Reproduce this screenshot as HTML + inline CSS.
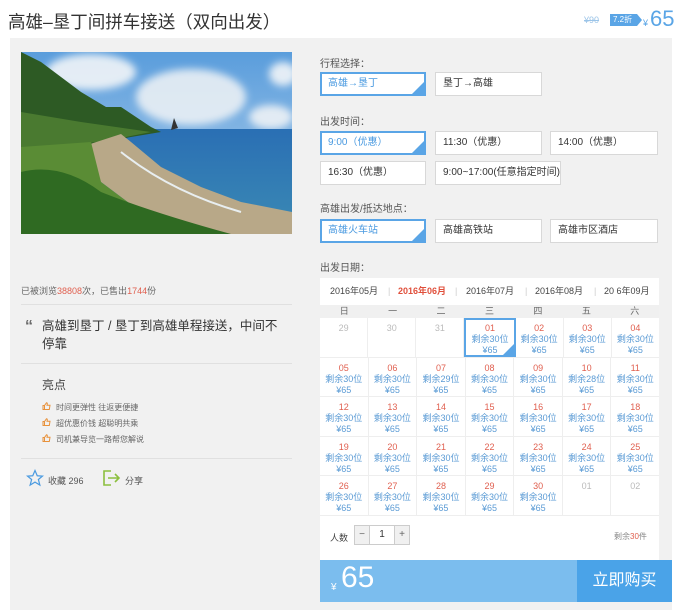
<!DOCTYPE html>
<html><head><meta charset="utf-8"><style>
*{margin:0;padding:0;box-sizing:border-box}
body{width:680px;height:610px;background:#fff;font-family:"Liberation Sans","Noto Sans CJK SC",sans-serif;position:relative;overflow:hidden;color:#333}
.a{position:absolute}
.panel{left:10px;top:38px;width:662px;height:572px;background:#f1f1f1}
.lbl{font-size:10px;color:#555}
.opt{position:absolute;height:24px;background:#fff;border:1px solid #d8d8d8;font-size:10px;color:#333;line-height:22px;padding-left:7px}
.opt.sel{border:2px solid #5aa5e6;color:#4a9ae0;line-height:20px;padding-left:6px}
.opt.sel:after{content:"";position:absolute;right:0;bottom:0;border-left:12px solid transparent;border-bottom:12px solid #5aa5e6}
.cal{left:320px;top:278px;width:339px;height:282px;background:#fff}
.months{position:absolute;top:0;left:0;width:339px;height:27px;font-size:9px;color:#444;line-height:27px}
.months span{position:absolute}
.wk{position:absolute;top:27px;left:0;width:339px;height:13px;background:#f0f0f0;display:flex}
.wk div{flex:1;text-align:center;font-size:9px;color:#666;line-height:13px}
.grid{position:absolute;top:40px;left:0;width:339px}
.row{display:flex;height:39.5px;border-bottom:1px solid #eee}
.c{flex:1;text-align:center;border-right:1px solid #eee;font-size:9px;line-height:11px;padding-top:5px;position:relative}
.c:last-child{border-right:none}
.c .d{color:#e06050}
.c.g .d{color:#bbb}
.c .s,.c .p{color:#5b9bd5}
.c.sel{border:2px solid #5aa5e6;padding-top:3px}
.c.sel:after{content:"";position:absolute;right:0;bottom:0;border-left:11px solid transparent;border-bottom:11px solid #5aa5e6}
.hi li{list-style:none;font-size:8px;color:#666;margin-bottom:5px;padding-left:14px;position:relative}
.hi svg{position:absolute;left:0;top:0}
</style></head><body>
<div class="a" style="left:8px;top:9px;font-size:17.5px;color:#333">高雄–垦丁间拼车接送（双向出发）</div>
<div class="a" style="left:584px;top:15px;font-size:9px;color:#9bc4e8;text-decoration:line-through">¥90</div>
<div class="a" style="left:610px;top:14px;height:12px;width:27px;background:#5aa5e6;color:#fff;font-size:8px;line-height:12px;padding-left:3px">7.2折</div>
<div class="a" style="left:637px;top:14px;border-left:5px solid #5aa5e6;border-top:6px solid transparent;border-bottom:6px solid transparent"></div>
<div class="a" style="left:643px;top:18px;font-size:9px;color:#5aa5e6">¥</div>
<div class="a" style="left:650px;top:6px;font-size:22px;color:#5aa5e6">65</div>

<div class="a panel"></div>
<svg class="a" style="left:21px;top:52px" width="271" height="182" viewBox="0 0 271 182">
<defs><linearGradient id="sky" x1="0" y1="0" x2="0" y2="1"><stop offset="0" stop-color="#5a9ddc"/><stop offset="1" stop-color="#b5d2ec"/></linearGradient>
<linearGradient id="sea" x1="0" y1="0" x2="0" y2="1"><stop offset="0" stop-color="#2a6fb4"/><stop offset="1" stop-color="#3b8ab4"/></linearGradient>
<filter id="bl"><feGaussianBlur stdDeviation="4"/></filter></defs>
<rect width="271" height="182" fill="url(#sky)"/>
<g filter="url(#bl)" opacity="0.9">
<ellipse cx="70" cy="20" rx="45" ry="18" fill="#f2f5f8"/>
<ellipse cx="170" cy="45" rx="55" ry="28" fill="#eaf0f5"/>
<ellipse cx="250" cy="65" rx="22" ry="12" fill="#eef2f6"/>
<ellipse cx="262" cy="22" rx="14" ry="12" fill="#f2f5f8"/>
</g>
<rect y="77" width="271" height="105" fill="url(#sea)"/>
<path d="M0 0 L20 10 L60 40 L85 55 L100 55 L130 75 L140 80 L110 85 L60 95 L0 110Z" fill="#2d5a24"/>
<path d="M0 60 L60 70 L130 80 L90 88 L0 100Z" fill="#4a7a30"/>
<path d="M150 78 L153 66 L157 76Z" fill="#333"/>
<path d="M60 95 L100 82 L110 90 L140 115 L180 135 L220 150 L271 160 L271 182 L180 182 L120 160 L80 130Z" fill="#b8a888"/>
<path d="M0 95 L70 90 L80 130 L120 160 L190 182 L0 182Z" fill="#5a8c35"/>
<path d="M0 120 Q40 110 80 140 Q130 160 210 182 L0 182Z" fill="#2f6a22"/>
<path d="M100 100 Q150 140 220 160" stroke="#e8eef0" stroke-width="2" fill="none"/>
</svg>

<div class="a" style="left:21px;top:284px;font-size:9px;color:#666">已被浏览<span style="color:#e06050">38808</span>次，已售出<span style="color:#e06050">1744</span>份</div>
<div class="a" style="left:21px;top:304px;width:271px;border-top:1px solid #e0e0e0"></div>
<div class="a" style="left:25px;top:318px;font-size:16px;color:#666;font-weight:bold">“</div>
<div class="a" style="left:42px;top:317px;width:240px;font-size:12.5px;line-height:18px;color:#333">高雄到垦丁 / 垦丁到高雄单程接送，中间不停靠</div>
<div class="a" style="left:21px;top:363px;width:271px;border-top:1px solid #e0e0e0"></div>
<div class="a" style="left:42px;top:376px;font-size:12px;color:#444">亮点</div>
<ul class="a hi" style="left:42px;top:402px">
<li><svg width="9" height="8" viewBox="0 0 9 8"><path d="M1 3.5H2.5V7.5H1Z M2.5 3.5L4.5 0.8Q5.5 0.8 5.3 2.3L5 3.3H8L7.3 7.5H2.5" fill="none" stroke="#e8913a" stroke-width="1"/></svg>时间更弹性 往返更便捷</li>
<li><svg width="9" height="8" viewBox="0 0 9 8"><path d="M1 3.5H2.5V7.5H1Z M2.5 3.5L4.5 0.8Q5.5 0.8 5.3 2.3L5 3.3H8L7.3 7.5H2.5" fill="none" stroke="#e8913a" stroke-width="1"/></svg>超优惠价钱 超聪明共乘</li>
<li><svg width="9" height="8" viewBox="0 0 9 8"><path d="M1 3.5H2.5V7.5H1Z M2.5 3.5L4.5 0.8Q5.5 0.8 5.3 2.3L5 3.3H8L7.3 7.5H2.5" fill="none" stroke="#e8913a" stroke-width="1"/></svg>司机兼导览一路帮您解说</li></ul>
<div class="a" style="left:21px;top:458px;width:271px;border-top:1px solid #e0e0e0"></div>
<svg class="a" style="left:26px;top:469px" width="18" height="18" viewBox="0 0 24 24"><path d="M12 2 L15 9 L22 9.5 L16.5 14 L18.5 21.5 L12 17.5 L5.5 21.5 L7.5 14 L2 9.5 L9 9Z" fill="none" stroke="#4a9ae0" stroke-width="1.6"/></svg>
<div class="a" style="left:48px;top:474px;font-size:9px;color:#555">收藏 296</div>
<svg class="a" style="left:103px;top:470px" width="18" height="16" viewBox="0 0 18 16"><path d="M8 1 H1 V15 H8" fill="none" stroke="#8cbf3f" stroke-width="1.6"/><path d="M5 8 H16 M12 4 L16 8 L12 12" fill="none" stroke="#8cbf3f" stroke-width="1.6"/></svg>
<div class="a" style="left:125px;top:474px;font-size:9px;color:#555">分享</div>

<div class="a lbl" style="left:320px;top:55px">行程选择：</div>
<div class="opt sel" style="left:320px;top:72px;width:106px">高雄→垦丁</div>
<div class="opt" style="left:435px;top:72px;width:107px">垦丁→高雄</div>
<div class="a lbl" style="left:320px;top:113px">出发时间：</div>
<div class="opt sel" style="left:320px;top:131px;width:106px">9:00（优惠）</div>
<div class="opt" style="left:435px;top:131px;width:107px">11:30（优惠）</div>
<div class="opt" style="left:550px;top:131px;width:108px">14:00（优惠）</div>
<div class="opt" style="left:320px;top:161px;width:106px">16:30（优惠）</div>
<div class="opt" style="left:435px;top:161px;width:126px">9:00~17:00(任意指定时间)</div>
<div class="a lbl" style="left:320px;top:200px">高雄出发/抵达地点：</div>
<div class="opt sel" style="left:320px;top:219px;width:106px">高雄火车站</div>
<div class="opt" style="left:435px;top:219px;width:107px">高雄高铁站</div>
<div class="opt" style="left:550px;top:219px;width:108px">高雄市区酒店</div>
<div class="a lbl" style="left:320px;top:259px">出发日期：</div>

<div class="a cal">
<div class="months"><span style="left:10px">2016年05月</span><span style="left:68px;color:#ccc">|</span><span style="left:78px;color:#e0503c;font-weight:bold">2016年06月</span><span style="left:135px;color:#ccc">|</span><span style="left:146px">2016年07月</span><span style="left:205px;color:#ccc">|</span><span style="left:215px">2016年08月</span><span style="left:274px;color:#ccc">|</span><span style="left:284px">20 6年09月</span></div>
<div class="wk"><div>日</div><div>一</div><div>二</div><div>三</div><div>四</div><div>五</div><div>六</div></div>
<div class="grid">
<div class="row"><div class="c g"><div class="d">29</div></div><div class="c g"><div class="d">30</div></div><div class="c g"><div class="d">31</div></div><div class="c sel"><div class="d">01</div><div class="s">剩余30位</div><div class="p">¥65</div></div><div class="c"><div class="d">02</div><div class="s">剩余30位</div><div class="p">¥65</div></div><div class="c"><div class="d">03</div><div class="s">剩余30位</div><div class="p">¥65</div></div><div class="c"><div class="d">04</div><div class="s">剩余30位</div><div class="p">¥65</div></div></div>
<div class="row"><div class="c"><div class="d">05</div><div class="s">剩余30位</div><div class="p">¥65</div></div><div class="c"><div class="d">06</div><div class="s">剩余30位</div><div class="p">¥65</div></div><div class="c"><div class="d">07</div><div class="s">剩余29位</div><div class="p">¥65</div></div><div class="c"><div class="d">08</div><div class="s">剩余30位</div><div class="p">¥65</div></div><div class="c"><div class="d">09</div><div class="s">剩余30位</div><div class="p">¥65</div></div><div class="c"><div class="d">10</div><div class="s">剩余28位</div><div class="p">¥65</div></div><div class="c"><div class="d">11</div><div class="s">剩余30位</div><div class="p">¥65</div></div></div>
<div class="row"><div class="c"><div class="d">12</div><div class="s">剩余30位</div><div class="p">¥65</div></div><div class="c"><div class="d">13</div><div class="s">剩余30位</div><div class="p">¥65</div></div><div class="c"><div class="d">14</div><div class="s">剩余30位</div><div class="p">¥65</div></div><div class="c"><div class="d">15</div><div class="s">剩余30位</div><div class="p">¥65</div></div><div class="c"><div class="d">16</div><div class="s">剩余30位</div><div class="p">¥65</div></div><div class="c"><div class="d">17</div><div class="s">剩余30位</div><div class="p">¥65</div></div><div class="c"><div class="d">18</div><div class="s">剩余30位</div><div class="p">¥65</div></div></div>
<div class="row"><div class="c"><div class="d">19</div><div class="s">剩余30位</div><div class="p">¥65</div></div><div class="c"><div class="d">20</div><div class="s">剩余30位</div><div class="p">¥65</div></div><div class="c"><div class="d">21</div><div class="s">剩余30位</div><div class="p">¥65</div></div><div class="c"><div class="d">22</div><div class="s">剩余30位</div><div class="p">¥65</div></div><div class="c"><div class="d">23</div><div class="s">剩余30位</div><div class="p">¥65</div></div><div class="c"><div class="d">24</div><div class="s">剩余30位</div><div class="p">¥65</div></div><div class="c"><div class="d">25</div><div class="s">剩余30位</div><div class="p">¥65</div></div></div>
<div class="row"><div class="c"><div class="d">26</div><div class="s">剩余30位</div><div class="p">¥65</div></div><div class="c"><div class="d">27</div><div class="s">剩余30位</div><div class="p">¥65</div></div><div class="c"><div class="d">28</div><div class="s">剩余30位</div><div class="p">¥65</div></div><div class="c"><div class="d">29</div><div class="s">剩余30位</div><div class="p">¥65</div></div><div class="c"><div class="d">30</div><div class="s">剩余30位</div><div class="p">¥65</div></div><div class="c g"><div class="d">01</div></div><div class="c g"><div class="d">02</div></div></div>
</div>
<div class="a" style="left:10px;top:253px;font-size:9px;color:#444">人数</div>
<div class="a" style="left:34px;top:247px;width:56px;height:20px;border:1px solid #ccc;display:flex;font-size:10px;line-height:18px;text-align:center">
<div style="width:15px;background:#f0f0f0;border-right:1px solid #ccc;color:#666">−</div><div style="flex:1">1</div><div style="width:15px;background:#f0f0f0;border-left:1px solid #ccc;color:#666">+</div></div>
<div class="a" style="left:294px;top:253px;font-size:8px;color:#888">剩余<span style="color:#e06050">30</span>件</div>
</div>

<div class="a" style="left:320px;top:560px;width:257px;height:42px;background:#7bbdee"></div>
<div class="a" style="left:577px;top:560px;width:95px;height:42px;background:#4aa3e8;color:#fff;font-size:16px;line-height:42px;text-align:center">立即购买</div>
<div class="a" style="left:331px;top:582px;font-size:10px;color:#fff">¥</div>
<div class="a" style="left:341px;top:561px;font-size:30px;color:#fff">65</div>
</body></html>
